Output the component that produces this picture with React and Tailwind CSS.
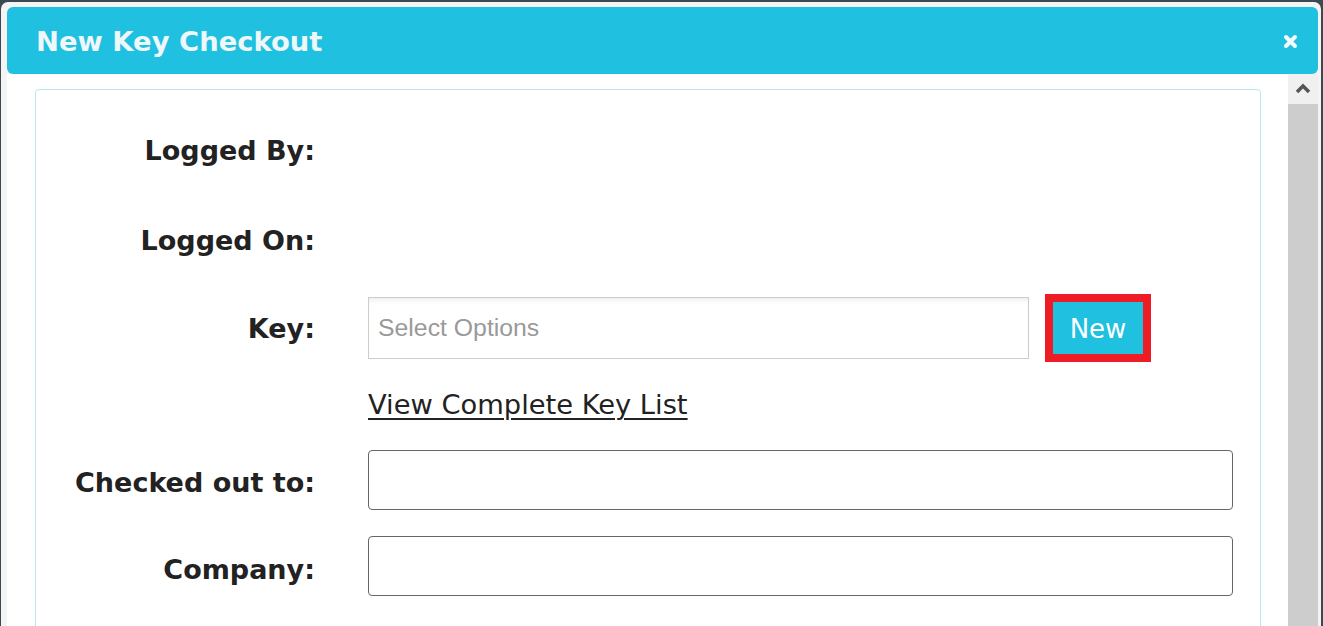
export default function App() {
  const label = "w-[279px] shrink-0 text-right font-bold text-[27px] text-[#222222] leading-none";
  return (
    <div className="w-[1323px] h-[626px] overflow-hidden bg-[#3b4a50] pt-[2px] pl-[1px]" style={{ fontFamily: '"DejaVu Sans", Verdana, sans-serif' }}>
      <div className="w-[1320px] h-[640px] bg-[#f4f4f4] rounded-t-[7px] pt-[5px] pl-[6px] flex flex-col">
        <div className="w-[1311px] h-[67px] shrink-0 rounded-[6px] bg-[#20c0e0] flex items-center justify-between pl-[29px] pr-[20px]">
          <div className="text-[27.4px] font-bold text-[#eef7fa] leading-none pt-[3px]">New Key Checkout</div>
          <svg width="15" height="15" viewBox="0 0 15 15" className="mt-[1px]">
            <path d="M3 3 L12 12 M12 3 L3 12" stroke="#f4fbfd" strokeWidth="4" strokeLinecap="round" />
          </svg>
        </div>
        <div className="flex flex-1">
          <div className="w-[1281px] bg-white pl-[28px] pr-[27px] pt-[15px]">
            <div className="h-[600px] border border-[#b9e6ef] rounded-[4px] flex flex-col">
              <div className="flex items-center h-[60px] mt-[30px]">
                <div className={label}>Logged By:</div>
              </div>
              <div className="flex items-center h-[60px] mt-[30px]">
                <div className={label}>Logged On:</div>
              </div>
              <div className="flex items-center h-[68px] mt-[24px]">
                <div className={label}>Key:</div>
                <div className="ml-[53px] w-[661px] h-[62px] border border-[#cccccc] bg-white shadow-[inset_0_6px_6px_-4px_rgba(0,0,0,0.08)] flex items-center pl-[9px]">
                  <span className="text-[24.8px] text-[#999999]" style={{ fontFamily: '"Liberation Sans", Arial, sans-serif' }}>Select Options</span>
                </div>
                <div className="ml-[16px] w-[106px] h-[68px] border-[8px] border-[#ee1c24] bg-[#20c0e0] flex items-center justify-center">
                  <span className="text-[26px] text-white leading-none pt-[2px]">New</span>
                </div>
              </div>
              <div className="flex items-center h-[36px] mt-[25px] pl-[332px]">
                <span className="text-[27.3px] text-[#222222] underline underline-offset-[4px] decoration-[2px] leading-none">View Complete Key List</span>
              </div>
              <div className="flex items-center h-[60px] mt-[27px]">
                <div className={`${label} pt-[4px]`}>Checked out to:</div>
                <div className="ml-[53px] w-[865px] h-[60px] border border-[#666666] rounded-[4px] bg-white" />
              </div>
              <div className="flex items-center h-[60px] mt-[26px]">
                <div className={`${label} pt-[6px]`}>Company:</div>
                <div className="ml-[53px] w-[865px] h-[60px] border border-[#666666] rounded-[4px] bg-white" />
              </div>
            </div>
          </div>
          <div className="w-[30px] flex flex-col">
            <div className="h-[30px] bg-[#f0f0f0] flex items-center justify-center">
              <svg width="16" height="12" viewBox="0 0 16 12">
                <path d="M2 9 L8 3 L14 9" stroke="#555555" strokeWidth="3.5" fill="none" />
              </svg>
            </div>
            <div className="flex-1 bg-[#cdcdcd]" />
          </div>
        </div>
      </div>
    </div>
  );
}
